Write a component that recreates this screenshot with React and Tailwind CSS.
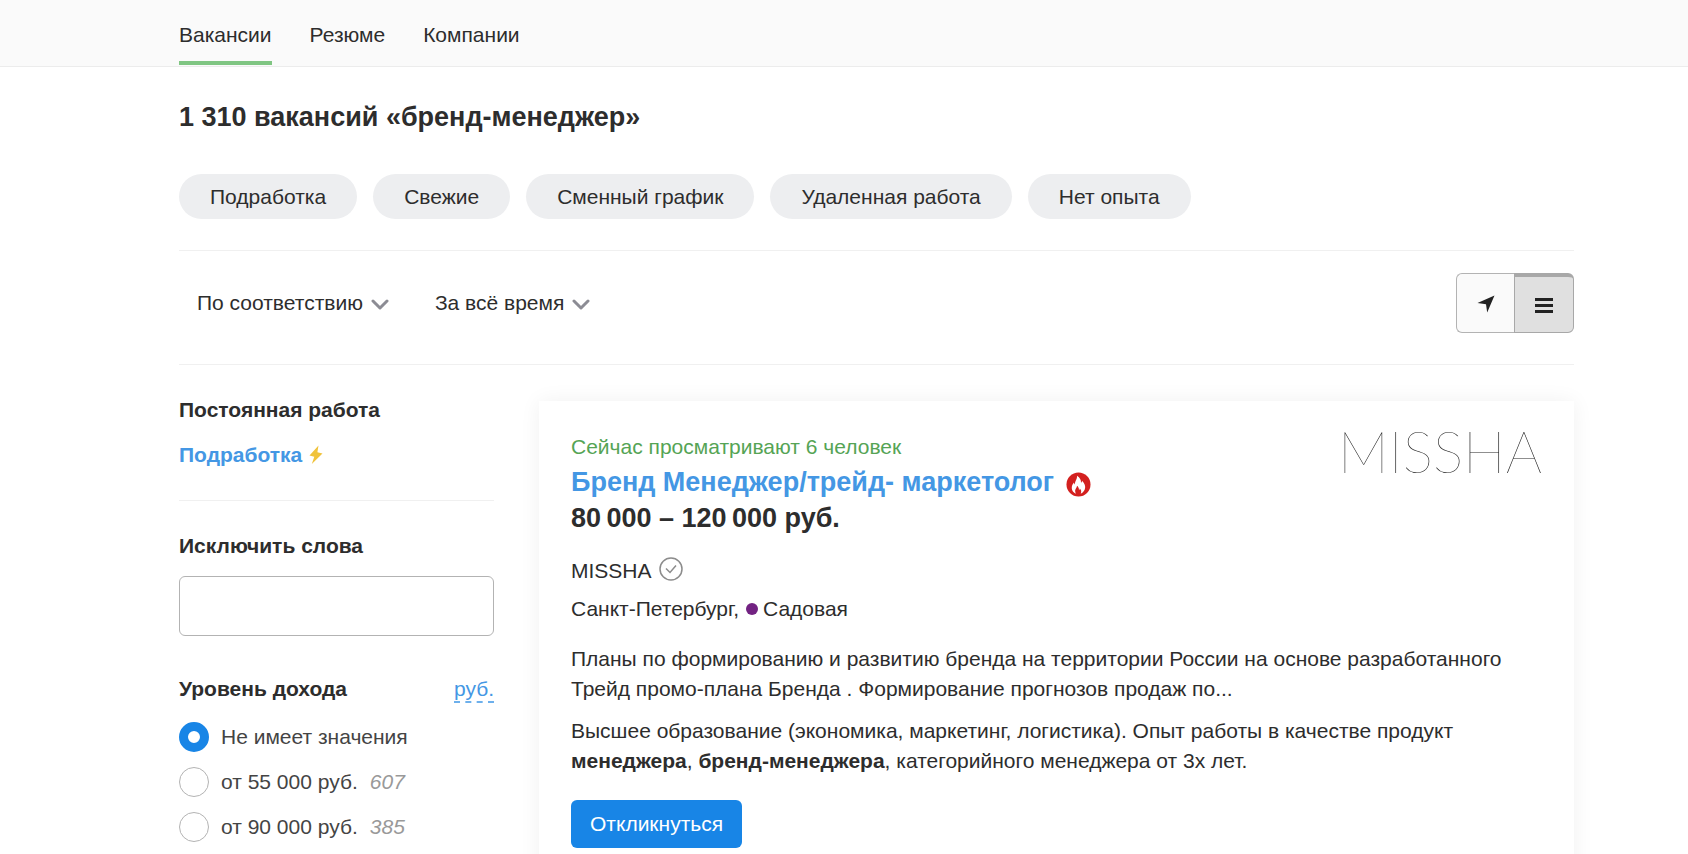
import React, { useState } from 'react';

const tabs = ['Вакансии', 'Резюме', 'Компании'];
const chips = ['Подработка', 'Свежие', 'Сменный график', 'Удаленная работа', 'Нет опыта'];

const incomes = [
  { id: 'any', label: 'Не имеет значения' },
  { id: '55', label: 'от 55 000 руб.', count: 607 },
  { id: '90', label: 'от 90 000 руб.', count: 385 }
];

function Dropdown({ label, options }) {
  return (
    <div className="relative">
      <select
        aria-label={label}
        className="appearance-none [field-sizing:content] bg-transparent pr-[26px] leading-[30px] cursor-pointer"
      >
        {options.map((option) => (
          <option key={option}>{option}</option>
        ))}
      </select>
      <svg
        className="absolute right-0 top-3 pointer-events-none"
        width="18"
        height="11"
        viewBox="0 0 18 11"
        fill="none"
        stroke="#8c8c94"
        strokeWidth="3"
      >
        <path d="M2 2l7 7 7-7" strokeLinecap="round" strokeLinejoin="round" />
      </svg>
    </div>
  );
}

function Filters() {
  const [income, setIncome] = useState('any');

  return (
    <aside>
      <h2 className="font-bold leading-[30px] mb-[15px]">Постоянная работа</h2>
      <a href="#part-time" className="flex items-center gap-[7px] font-bold leading-[30px] text-[#4497e4]">
        Подработка
        <svg width="14" height="20" viewBox="0 0 14 20" fill="#f0c33c">
          <path d="M9.5 0.5L0.500 10.500l4.800 1.300L2.800 19 13.500 8.500 8.400 7.200z" />
        </svg>
      </a>

      <hr className="my-[30px] border-[#f0f0f0]" />

      <label htmlFor="exclude" className="block font-bold leading-[30px] mb-[15px]">
        Исключить слова
      </label>
      <input
        id="exclude"
        type="text"
        className="w-full h-[60px] px-4 border border-[#b3b3b3] rounded-md"
      />

      <div className="flex justify-between mt-[38px] mb-[18px] leading-[30px]">
        <h2 className="font-bold">Уровень дохода</h2>
        <button type="button" className="h-[29px] pt-px leading-7 text-[#4497e4] border-b-2 border-dashed border-[#6db0ec]">
          руб.
        </button>
      </div>

      <div className="flex flex-col gap-[15px]">
        {incomes.map((item) => (
          <label key={item.id} className="flex items-center leading-[30px] text-[#444]">
            <input
              type="radio"
              name="income"
              checked={income === item.id}
              onChange={() => setIncome(item.id)}
              className="appearance-none size-[30px] mr-3 shrink-0 rounded-full border border-[#b3b3b3] bg-white checked:border-[9px] checked:border-[#1885e6]"
            />
            {item.label}
            {item.count && <i className="ml-3 text-[#999]">{item.count}</i>}
          </label>
        ))}
      </div>
    </aside>
  );
}

function VacancyCard() {
  return (
    <article className="p-8 bg-white shadow-[0_0_20px_rgba(0,0,0,0.06)]">
      <div className="flex justify-between items-start">
        <div>
          <p className="mb-[3px] leading-7 text-[#55a455]">Сейчас просматривают 6 человек</p>
          <h2 className="flex items-center gap-3 text-[27px] leading-9 font-bold">
            <a href="#vacancy" className="text-[#4497e4]">Бренд Менеджер/трейд- маркетолог</a>
            <svg className="mt-1" width="25" height="25" viewBox="0 0 26 26">
              <circle cx="13" cy="13" r="12.5" fill="#d3201f" />
              <path
                d="M11.500 4c3 2 4.300 4.600 4.100 7.200.7-.5 1-1.200 1.100-2.200 2.300 2.300 3.500 4.700 3.200 7.400-.3 3-2.100 5-4.600 6.100.9-2 .7-3.800-.9-5.300-.1.900-.4 1.400-.9 1.700.1-2-.6-3.500-2.100-4.600.2 1.900-1.700 3-1.900 5-.1 1.200.2 2.200.8 3.200-2.500-1-4.200-3-4.300-5.700-.1-2.300.9-4.200 2.300-5.900.1 1 .4 1.700 1 2.200C9 9.800 11.700 7.800 11.500 4z"
                fill="#fff"
              />
            </svg>
          </h2>
          <p className="text-[27px] leading-9 font-bold">80&#8201;000 – 120&#8201;000 руб.</p>
        </div>
        <a href="#missha" className="font-[Lato] text-[57px] leading-9 font-thin text-[#222]">MISSHA</a>
      </div>

      <div className="flex items-center gap-[7px] mt-4 leading-[38px]">
        MISSHA
        <svg className="mb-1" width="24" height="24" viewBox="0 0 24 24" fill="none" stroke="#8c8c8c" strokeWidth="1.500">
          <circle cx="12" cy="12" r="11" />
          <path d="M7 11.500l4 4 6-7" />
        </svg>
      </div>
      <div className="flex items-center leading-[38px]">
        Санкт-Петербург,
        <span className="size-3 mx-[7px] mr-[5px] rounded-full bg-[#722282]"></span>
        Садовая
      </div>

      <p className="mt-4 leading-[30px]">
        Планы по формированию и развитию бренда на территории России на основе разработанного Трейд
        промо-плана Бренда . Формирование прогнозов продаж по...
      </p>
      <p className="mt-3 leading-[30px]">
        Высшее образование (экономика, маркетинг, логистика). Опыт работы в качестве продукт{' '}
        <b>менеджера</b>, <b>бренд-менеджера</b>, категорийного менеджера от 3х лет.
      </p>

      <button type="button" className="h-12 mt-6 px-[19px] rounded-md bg-[#1885e6] text-white">
        Откликнуться
      </button>
    </article>
  );
}

function App() {
  const [view, setView] = useState('list');

  return (
    <div className="min-h-screen bg-white font-['Liberation_Sans',Arial,sans-serif] text-[21px] text-[#2d2d2d]">
      <header className="pb-px bg-[#fafafa] border-b border-[#ececec]">
        <nav className="flex gap-[38px] pl-[179px] pr-[114px]">
          {tabs.map((tab, i) => (
            <a
              key={tab}
              href="#"
              className={`h-[65px] pt-5 leading-[30px] border-b-4 ${i === 0 ? 'border-[#80c683]' : 'border-transparent'}`}
            >
              {tab}
            </a>
          ))}
        </nav>
      </header>

      <main className="pl-[179px] pr-[114px]">
        <h1 className="pt-8 text-[27px] leading-9 font-bold">1 310 вакансий «бренд-менеджер»</h1>

        <div className="flex flex-wrap gap-4 pt-[39px] pb-[31px]">
          {chips.map((chip) => (
            <button key={chip} type="button" className="h-[45px] px-[31px] rounded-full bg-[#edeef0]">
              {chip}
            </button>
          ))}
        </div>

        <div className="flex items-center justify-between pt-[22px] pb-[31px] border-y border-[#f0f0f0]">
          <div className="flex gap-[46px] pl-[18px]">
            <Dropdown label="Сортировка" options={['По соответствию', 'По дате']} />
            <Dropdown label="Период" options={['За всё время', 'За неделю']} />
          </div>
          <div className="flex">
            <button
              type="button"
              aria-label="На карте"
              onClick={() => setView('map')}
              className="flex items-center justify-center w-[58px] h-[60px] pt-0.5 rounded-l-md border border-r-0 border-[#b3b3b3] bg-[#fafafa]"
            >
              <svg width="18" height="18" viewBox="0 0 18 18" fill="#222">
                <path d="M17.500 0.500L10.200 17.500 9 9.200 0.500 8z" />
              </svg>
            </button>
            <button
              type="button"
              aria-label="Списком"
              aria-pressed={view === 'list'}
              onClick={() => setView('list')}
              className="flex items-center justify-center w-[60px] h-[60px] pt-0.5 rounded-r-md border border-t-4 border-[#a8a8a8] bg-[#e0e0e0]"
            >
              <svg width="18" height="15" viewBox="0 0 18 15" fill="#222">
                <path d="M0 0h18v3H0zM0 6h18v3H0zM0 12h18v3H0z" />
              </svg>
            </button>
          </div>
        </div>

        <div className="grid grid-cols-[315px_1fr] gap-[45px] items-start">
          <div className="pt-[30px]">
            <Filters />
          </div>
          <div className="pt-9">
            <VacancyCard />
          </div>
        </div>
      </main>
    </div>
  );
}

export default App;
